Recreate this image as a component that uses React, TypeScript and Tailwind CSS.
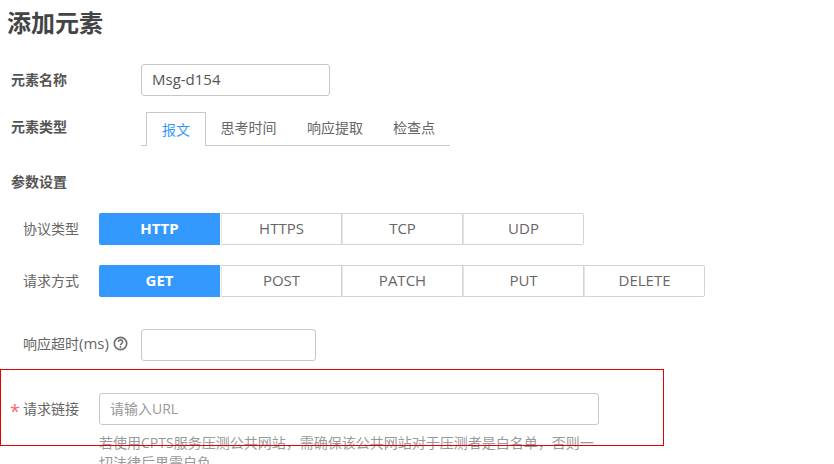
const font = { fontFamily: '"Open Sans", "Noto Sans CJK SC", sans-serif' };

function Seg({ items }: { items: string[] }) {
  return (
    <div className="flex">
      {items.map((t, i) => (
        <div
          key={t}
          className={
            i === 0
              ? "w-[121px] h-[32px] mr-[1px] pb-[2px] flex items-center justify-center bg-[#3399ff] text-white font-bold text-[15px] rounded-l-[2px]"
              : "w-[121px] h-[32px] pb-[2px] flex items-center justify-center bg-white text-[#666666] text-[15px] border border-[#d4d4d4] border-l-[#e4e4e4] last:rounded-r-[2px]"
          }
        >
          {t}
        </div>
      ))}
    </div>
  );
}

export default function App() {
  return (
    <div style={font} className="relative w-[834px] h-[464px] overflow-hidden bg-white text-[#666666]">
      <h1 className="pl-[7px] pt-[7px] h-[64px] text-[24px] leading-[32px] font-bold text-[#444444]">添加元素</h1>

      <div className="flex items-center h-[32px] pl-[11px]">
        <span className="w-[130px] pb-[2px] text-[14px] font-bold text-[#555555]">元素名称</span>
        <div className="w-[189px] h-[32px] border border-[#c8c8c8] rounded-[3px] pl-[10px] pb-[1px] flex items-center text-[15px] text-[#555555]">Msg-d154</div>
      </div>

      <div className="flex mt-[16px] pl-[11px] h-[34px]">
        <span className="w-[130px] text-[14px] font-bold text-[#555555] leading-[30px]">元素类型</span>
        <div className="w-[309px] h-[34px] flex pl-[5px] border-b border-[#c8c8c8] text-[14px]">
          <div className="w-[60px] h-[34px] border border-b-0 border-[#c8c8c8] bg-white text-[#3399ff] flex items-center justify-center">报文</div>
          <div className="w-[86px] pb-[2px] pr-[1px] flex items-center justify-center">思考时间</div>
          <div className="w-[86px] pb-[2px] flex items-center justify-center">响应提取</div>
          <div className="w-[72px] pb-[2px] flex items-center justify-center">检查点</div>
        </div>
      </div>

      <div className="pl-[11px] mt-[25px] h-[22px] leading-[22px] text-[14px] font-bold text-[#555555]">参数设置</div>

      <div className="flex items-center mt-[20px] pl-[23px] h-[32px]">
        <span className="w-[76px] pb-[1px] text-[14px]">协议类型</span>
        <Seg items={["HTTP", "HTTPS", "TCP", "UDP"]} />
      </div>
      <div className="flex items-center mt-[20px] pl-[23px] h-[32px]">
        <span className="w-[76px] pb-[1px] text-[14px]">请求方式</span>
        <Seg items={["GET", "POST", "PATCH", "PUT", "DELETE"]} />
      </div>

      <div className="flex items-center mt-[32px] pl-[23px] h-[32px]">
        <span className="w-[118px] pb-[3px] flex items-center text-[14px]">
          响应超时<span className="text-[15px]">(ms)</span>
          <svg className="ml-[4px]" width="15" height="15" viewBox="0 0 15 15" fill="none" stroke="#707070">
            <circle cx="7.5" cy="7.5" r="6.2" strokeWidth="1.7" />
            <path d="M5.4 6a2.1 2 0 1 1 3.2 1.6c-.7.5-1.1.8-1.1 1.6" strokeWidth="1.5" />
            <circle cx="7.5" cy="11" r="0.9" fill="#707070" stroke="none" />
          </svg>
        </span>
        <div className="w-[175px] h-[32px] border border-[#c8c8c8] rounded-[3px]" />
      </div>

      <div className="flex items-center mt-[32px] pl-[10px] h-[32px]">
        <span className="w-[13px] text-[#ff6666] text-[18px] leading-[32px] pt-[4px]">*</span>
        <span className="w-[76px] pb-[1px] text-[14px]">请求链接</span>
        <div className="w-[500px] h-[32px] border border-[#c8c8c8] rounded-[3px] pl-[10px] pb-[1px] flex items-center text-[14px] text-[#999999]">请输入URL</div>
      </div>

      <p className="ml-[99px] mt-[8px] w-[500px] text-[14px] leading-[20px] text-[#999999]">
        若使用CPTS服务压测公共网站，需确保该公共网站对于压测者是白名单，否则一切法律后果需自负。
      </p>

      <div className="absolute left-0 top-[369px] w-[664px] h-[77px] border border-[#e60000]" />
    </div>
  );
}
